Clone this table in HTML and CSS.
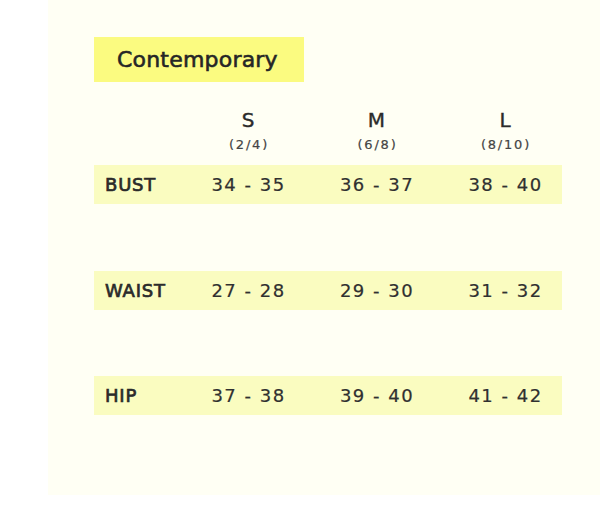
FILE: index.html
```html
<!DOCTYPE html>
<html>
<head>
<meta charset="utf-8">
<link rel="stylesheet" href="styles.css">
</head>
<body>
<div class="panel">
  <div class="title">Contemporary</div>
  <div class="grid head">
    <div></div>
    <div class="size"><div class="letter">S</div><div class="sub">(2/4)</div></div>
    <div class="size"><div class="letter">M</div><div class="sub">(6/8)</div></div>
    <div class="size"><div class="letter">L</div><div class="sub">(8/10)</div></div>
  </div>
  <div class="rows">
    <div class="grid row">
      <div class="label">BUST</div>
      <div class="val">34 - 35</div>
      <div class="val">36 - 37</div>
      <div class="val">38 - 40</div>
    </div>
    <div class="grid row">
      <div class="label">WAIST</div>
      <div class="val">27 - 28</div>
      <div class="val">29 - 30</div>
      <div class="val">31 - 32</div>
    </div>
    <div class="grid row">
      <div class="label">HIP</div>
      <div class="val">37 - 38</div>
      <div class="val">39 - 40</div>
      <div class="val">41 - 42</div>
    </div>
  </div>
</div>
</body>
</html>
```

FILE: styles.css
```css
html, body {
  margin: 0;
  padding: 0;
  background: #ffffff;
}

body {
  font-family: "DejaVu Sans", Verdana, sans-serif;
  color: #333333;
}

.panel {
  margin-left: 48px;
  width: 552px;
  height: 495px;
  box-sizing: border-box;
  padding: 37px 0 0 46px;
  background: #fffff4;
}

.title {
  width: 210px;
  height: 45px;
  box-sizing: border-box;
  padding-left: 23px;
  background: #fbfb80;
  font-size: 22px;
  line-height: 45px;
  letter-spacing: 0.2px;
  color: #262626;
  -webkit-text-stroke: 0.6px #262626;
}

.grid {
  display: grid;
  grid-template-columns: 90px 128px 129px 128px;
  width: 468px;
}

.head {
  margin-top: 26px;
}

.size {
  text-align: center;
}

.letter {
  font-size: 20px;
  line-height: 24px;
  color: #2b2b2b;
  -webkit-text-stroke: 0.4px #2b2b2b;
}

.sub {
  margin-top: 5px;
  font-size: 13px;
  line-height: 16px;
  letter-spacing: 1.8px;
  padding-left: 2px;
  color: #444444;
  -webkit-text-stroke: 0.2px #444444;
}

.rows {
  margin-top: 12px;
  display: flex;
  flex-direction: column;
  gap: 66.5px;
}

.row {
  height: 39px;
  align-items: center;
  background: #fafcc0;
}

.label {
  padding-left: 11px;
  font-size: 18px;
  letter-spacing: 0.8px;
  color: #2a2a2a;
  -webkit-text-stroke: 0.7px #2a2a2a;
}

.val {
  text-align: center;
  font-size: 18px;
  letter-spacing: 1.5px;
  padding-left: 1px;
  color: #303030;
  -webkit-text-stroke: 0.2px #303030;
}
```
